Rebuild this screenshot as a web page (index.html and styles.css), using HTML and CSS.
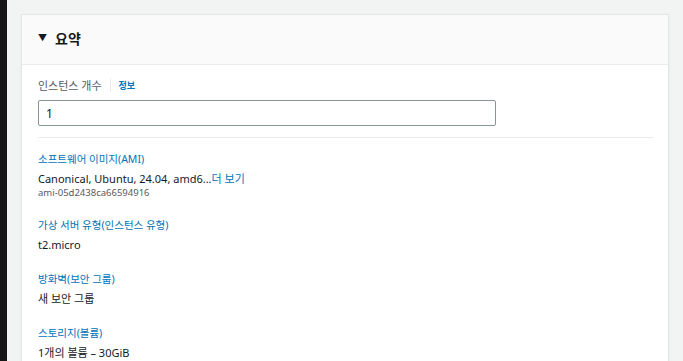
FILE: index.html
```html
<!DOCTYPE html>
<html lang="ko">
<head>
    <meta charset="UTF-8">
    <title>요약</title>
    <link rel="stylesheet" href="styles.css">
</head>
<body>
    <div class="side-strip"></div>
    <div class="page">
        <div class="card">
            <div class="card-header">
                <span class="caret">&#9660;</span>
                <h2>요약</h2>
            </div>
            <div class="card-body">
                <div class="field-label">
                    <span>인스턴스 개수</span>
                    <span class="divider"></span>
                    <a class="info-link">정보</a>
                </div>
                <input class="count-input" type="text" value="1">

                <div class="rule"></div>

                <div class="summary-item">
                    <a class="item-title">소프트웨어 이미지(AMI)</a>
                    <div class="item-value">Canonical, Ubuntu, 24.04, amd6...<a class="more-link">더 보기</a></div>
                    <div class="item-sub">ami-05d2438ca66594916</div>
                </div>

                <div class="summary-item">
                    <a class="item-title">가상 서버 유형(인스턴스 유형)</a>
                    <div class="item-value">t2.micro</div>
                </div>

                <div class="summary-item">
                    <a class="item-title">방화벽(보안 그룹)</a>
                    <div class="item-value">새 보안 그룹</div>
                </div>

                <div class="summary-item">
                    <a class="item-title">스토리지(볼륨)</a>
                    <div class="item-value">1개의 볼륨 – 30GiB</div>
                </div>
            </div>
        </div>
    </div>
</body>
</html>
```

FILE: styles.css
```css
html, body {
    margin: 0;
    padding: 0;
    height: 100%;
    overflow: hidden;
}
body {
    display: flex;
    font-family: "Noto Sans", "Noto Sans CJK KR", sans-serif;
    background-color: #f2f3f3;
    color: #16191f;
}
.side-strip {
    width: 7px;
    flex-shrink: 0;
    background-color: #161616;
}
.page {
    flex: 1;
    padding: 14px 14px 0 14px;
}
.card {
    background-color: #ffffff;
    border: 1px solid #e4e6e6;
    border-bottom: none;
    box-shadow: 0 1px 2px rgba(0, 0, 0, 0.06);
}
.card-header {
    display: flex;
    align-items: center;
    gap: 8px;
    box-sizing: border-box;
    height: 50px;
    padding: 0 16px 4px;
    background-color: #fafafa;
    border-bottom: 1px solid #e9ebed;
}
.caret {
    font-size: 9px;
    color: #16191f;
}
.card-header h2 {
    margin: 0;
    font-size: 14px;
    font-weight: 700;
    color: #16191f;
}
.card-body {
    padding: 12px 15px 0 16px;
}
.field-label {
    display: flex;
    align-items: center;
    gap: 8px;
    font-size: 11px;
    color: #545b64;
    height: 16px;
}
.divider {
    width: 1px;
    height: 14px;
    background-color: #eaeded;
}
.info-link {
    font-size: 9px;
    font-weight: 700;
    color: #0073bb;
}
.count-input {
    display: block;
    box-sizing: border-box;
    width: 458px;
    height: 26px;
    margin-top: 7px;
    padding: 0 7px;
    border: 1px solid #879596;
    border-radius: 2px;
    font-family: inherit;
    font-size: 12px;
    color: #16191f;
}
.rule {
    height: 1px;
    background-color: #eaeded;
    margin: 11px 0 13px;
}
.summary-item {
    margin-bottom: 18px;
}
.item-title {
    display: block;
    font-size: 10.5px;
    color: #0073bb;
    line-height: 16px;
}
.item-value {
    margin-top: 4px;
    font-size: 11px;
    line-height: 16px;
}
.more-link {
    color: #0073bb;
}
.item-sub {
    font-size: 9.5px;
    color: #545b64;
    line-height: 12px;
}
```
